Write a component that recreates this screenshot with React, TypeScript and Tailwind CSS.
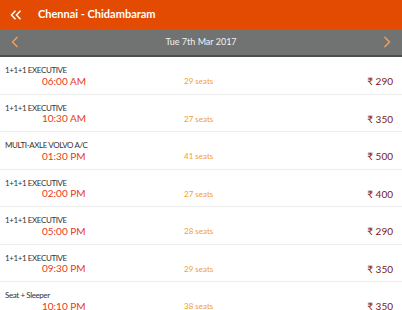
const trips = [
  { type: "1+1+1 EXECUTIVE", time: "06:00 AM", seats: 29, fare: 290 },
  { type: "1+1+1 EXECUTIVE", time: "10:30 AM", seats: 27, fare: 350 },
  { type: "MULTI-AXLE VOLVO A/C", time: "01:30 PM", seats: 41, fare: 500 },
  { type: "1+1+1 EXECUTIVE", time: "02:00 PM", seats: 27, fare: 400 },
  { type: "1+1+1 EXECUTIVE", time: "05:00 PM", seats: 28, fare: 290 },
  { type: "1+1+1 EXECUTIVE", time: "09:30 PM", seats: 29, fare: 350 },
  { type: "Seat + Sleeper", time: "10:10 PM", seats: 38, fare: 350 },
];

function Chevron({ dir }: { dir: "left" | "right" }) {
  return (
    <svg width="8" height="12" viewBox="0 0 8 12" fill="none">
      <path
        d={dir === "left" ? "M6.5 1 L1.5 6 L6.5 11" : "M1.5 1 L6.5 6 L1.5 11"}
        stroke="#f2a15e"
        strokeWidth="1.4"
      />
    </svg>
  );
}

export default function App() {
  return (
    <div className="w-[402px] h-[310px] overflow-hidden bg-white font-['Lato',sans-serif]">
      <div className="h-[29px] bg-[#e34b02] flex items-center">
        <svg width="12" height="10" viewBox="0 0 12 10" fill="none" className="ml-[10px]">
          <path d="M5.5 0.8 L1.5 5 L5.5 9.2 M10.5 0.8 L6.5 5 L10.5 9.2" stroke="#fff" strokeWidth="1.5" />
        </svg>
        <span className="ml-[16px] text-white text-[11px] font-bold">Chennai - Chidambaram</span>
      </div>
      <div className="h-[28px] bg-[#717373] border-b-2 border-[#4e5050] flex items-center justify-between px-[11px]">
        <Chevron dir="left" />
        <span className="text-[#f2f2f2] text-[9px]">Tue 7th Mar 2017</span>
        <Chevron dir="right" />
      </div>
      {trips.map((t, i) => (
        <div key={i} className="h-[37.5px] border-b border-[#ececec]">
          <div className="pl-[5px] pt-[8px] text-[8px] tracking-[-0.4px] text-[#333] leading-[10px]">{t.type}</div>
          <div className="flex items-center h-[12px]">
            <div className="w-[184px] pl-[42px] text-[10px] text-[#e8381c]">{t.time}</div>
            <div className="text-[8px] text-[#f5a02a]">{t.seats} seats</div>
            <div className="ml-auto pr-[9px] text-[10px] leading-[12px] text-[#7a2020]">₹ {t.fare}</div>
          </div>
        </div>
      ))}
    </div>
  );
}
